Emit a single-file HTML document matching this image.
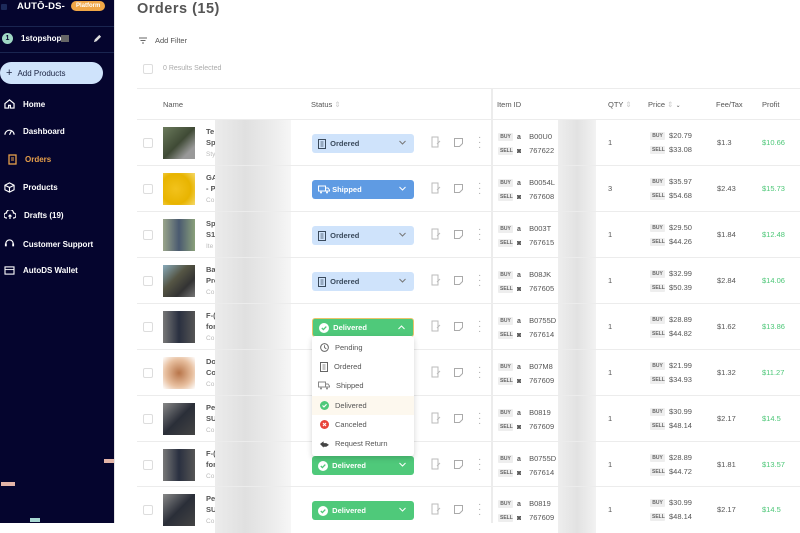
<!DOCTYPE html>
<html><head><meta charset="utf-8"><style>
*{margin:0;padding:0;box-sizing:border-box}
body{width:800px;height:523px;overflow:hidden;background:#fff;font-family:"Liberation Sans",sans-serif;position:relative;color:#444}
.a{position:absolute}
#sb{left:0;top:0;width:114px;height:523px;background:#05052e}
.nav{position:absolute;left:0;color:#fff;font-size:8px;font-weight:bold;display:flex;align-items:center}
.nav svg{margin:0 8px 0 4px}
#main{left:114px;top:0;width:686px;height:523px;border-left:1px solid #e4e4e4}
.hd{font-size:7.5px;color:#555}
.row{position:absolute;left:137px;width:663px;height:46px;border-top:1px solid #ececec}
.cb{position:absolute;left:6px;top:18px;width:10px;height:10px;border:1px solid #ddd;border-radius:2px}
.img{position:absolute;left:26px;top:7px;width:32px;height:32px}
.nm{position:absolute;left:69px;font-size:7.5px;color:#555;font-weight:bold;line-height:11px;top:6px}
.nm i{font-style:normal;font-weight:normal;color:#bbb;font-size:6.5px}
.blur{position:absolute;left:78px;top:0;width:76px;height:46px;background:linear-gradient(90deg,#ececec,#e0e0e0 40%,#eaeaea 70%,#f6f6f6)}
.pill{position:absolute;left:175px;top:14px;width:102px;height:19px;border-radius:3px;font-size:7.5px;font-weight:bold;display:flex;align-items:center;padding-left:6px}
.pill svg.ch{position:absolute;right:8px;top:6px}
.ord{background:#cfe3fb;color:#3a4a5c}
.shp{background:#5f9be3;color:#fff}
.del{background:#4fc97a;color:#fff}
.ic{position:absolute;top:16px}
.tag{display:inline-block;background:#eee;color:#666;font-size:5px;font-weight:bold;height:8px;line-height:8px;padding:0 2px;border-radius:1px;width:15px;text-align:center;margin-right:4px;vertical-align:middle}
.iid{position:absolute;left:361px;top:10px;font-size:7.5px;color:#555;line-height:13px}
.iid b{display:inline-block;width:10px;font-size:7px;color:#555}
.iblur{position:absolute;left:421px;top:0;width:38px;height:46px;background:linear-gradient(90deg,#eee,#e2e2e2 50%,#f2f2f2)}
.qty{position:absolute;left:471px;top:18px;font-size:7.5px;color:#555}
.pr{position:absolute;left:513px;top:9px;font-size:7.5px;color:#555;line-height:14px}
.fee{position:absolute;left:580px;top:18px;font-size:7.5px;color:#555}
.pf{position:absolute;left:625px;top:18px;font-size:7.5px;color:#4cc777}
#dd{left:312px;top:336px;width:102px;height:120px;background:#fff;box-shadow:0 2px 6px rgba(0,0,0,.18);border-radius:3px;z-index:5}
.di{position:absolute;left:0;width:102px;height:19px;font-size:7.5px;color:#555;display:flex;align-items:center;padding-left:8px}
.di svg{margin-right:6px}
</style></head><body>
<div id="sb" class="a">
 <div class="a" style="left:1px;top:4px;width:6px;height:6px;background:#1c2a5a;border-radius:1px"></div>
 <div class="a" style="left:17px;top:1px;color:#fff;font-weight:bold;font-size:9.5px;letter-spacing:.2px">AUTŌ-DS-</div>
 <div class="a" style="left:71px;top:1px;background:#f0a646;color:#fff;font-size:6px;font-weight:bold;border-radius:7px;padding:2px 5px">Platform</div>
 <div class="a" style="left:0;top:26px;width:114px;height:1px;background:#1a2550"></div>
 <div class="a" style="left:2px;top:33px;width:11px;height:11px;border-radius:50%;background:#9fd8c4;color:#05052e;font-size:7px;text-align:center;line-height:11px;font-weight:bold">1</div>
 <div class="a" style="left:21px;top:34px;color:#fff;font-size:8px;font-weight:bold">1stopshop<span style="display:inline-block;width:8px;height:7px;background:#666;vertical-align:middle"></span></div>
 <svg class="a" style="left:93px;top:34px" width="9" height="9" viewBox="0 0 10 10"><path d="M1 9l1-3 5-5 2 2-5 5z" fill="#ddd"/></svg>
 <div class="a" style="left:0;top:52px;width:114px;height:1px;background:#1a2550"></div>
 <div class="a" style="left:0;top:62px;width:103px;height:22px;border-radius:11px;background:#cfe3fb;color:#1a2240;font-size:8px;display:flex;align-items:center;padding-left:6px"><span style="font-size:11px;margin-right:5px">+</span>Add Products</div>
 <div class="nav" style="top:99px"><svg width="11" height="10" viewBox="0 0 12 11"><path d="M1 5L6 1l5 4v5H7V7H5v3H1z" fill="none" stroke="#fff" stroke-width="1.3"/></svg>Home</div>
 <div class="nav" style="top:127px"><svg width="11" height="8" viewBox="0 0 12 8"><path d="M1 7A5 5 0 0 1 11 7M6 7L8 3" fill="none" stroke="#fff" stroke-width="1.3"/></svg>Dashboard</div>
 <div class="nav" style="top:154px;left:4px;color:#e8a04a"><svg width="9" height="11" viewBox="0 0 9 11"><rect x="1" y="1" width="7" height="9" fill="none" stroke="#e8a04a" stroke-width="1.3"/><path d="M3 4h3M3 6h3" stroke="#e8a04a"/></svg>Orders</div>
 <div class="nav" style="top:182px"><svg width="11" height="11" viewBox="0 0 12 12"><path d="M6 1l5 2.5v5L6 11 1 8.5v-5zM1 3.5L6 6l5-2.5M6 6v5" fill="none" stroke="#fff" stroke-width="1.2"/></svg>Products</div>
 <div class="nav" style="top:210px"><svg width="12" height="10" viewBox="0 0 12 10"><path d="M3 8H2.5a2.5 2.5 0 0 1 0-5A3.5 3.5 0 0 1 9.5 3a2.5 2.5 0 0 1 0 5H9M6 9V5M4.5 6.5L6 5l1.5 1.5" fill="none" stroke="#fff" stroke-width="1.2"/></svg>Drafts (19)</div>
 <div class="nav" style="top:239px"><svg width="11" height="11" viewBox="0 0 12 12"><path d="M2 7V5a4 4 0 0 1 8 0v2" fill="none" stroke="#fff" stroke-width="1.3"/><rect x="1" y="5" width="2" height="3" fill="#fff"/><rect x="9" y="5" width="2" height="3" fill="#fff"/></svg>Customer Support</div>
 <div class="nav" style="top:266px"><svg width="11" height="9" viewBox="0 0 12 10"><rect x="1" y="1" width="10" height="8" fill="none" stroke="#fff" stroke-width="1.2"/><path d="M1 4h10" stroke="#fff"/></svg>AutoDS Wallet</div>
 <div class="a" style="left:104px;top:459px;width:10px;height:4px;background:#e3b5a8"></div>
 <div class="a" style="left:1px;top:482px;width:14px;height:4px;background:#e3b5a8"></div>
 <div class="a" style="left:30px;top:518px;width:10px;height:4px;background:#a8d8d3"></div>
</div>
<div id="main" class="a"></div>
<div class="a" style="left:137px;top:1px;font-size:14.5px;font-weight:bold;color:#555;letter-spacing:.5px">Orders (15)</div>
<svg class="a" style="left:139px;top:37px" width="8" height="7" viewBox="0 0 8 7"><path d="M0 1h8M1.5 3.5h5M3 6h2" stroke="#666" stroke-width="1"/></svg>
<div class="a" style="left:155px;top:36px;font-size:7.5px;color:#555">Add Filter</div>
<div class="a" style="left:143px;top:64px;width:10px;height:10px;border:1px solid #ddd;border-radius:2px"></div>
<div class="a" style="left:163px;top:65px;font-size:7px;color:#aaa">0 Results Selected</div>
<div class="a" style="left:137px;top:88px;width:663px;height:1px;background:#ececec"></div>
<div class="a" style="left:491px;top:88px;width:2px;height:435px;background:#ececec"></div>
<div class="a hd" style="left:163px;top:100px">Name</div>
<div class="a hd" style="left:311px;top:100px">Status <span style="color:#ccc">⇕</span></div>
<div class="a hd" style="left:497px;top:100px">Item ID</div>
<div class="a hd" style="left:608px;top:100px">QTY <span style="color:#ccc">⇕</span></div>
<div class="a hd" style="left:648px;top:100px">Price <span style="color:#ccc">⇕</span> <span style="font-size:6px">⌄</span></div>
<div class="a hd" style="left:716px;top:100px">Fee/Tax</div>
<div class="a hd" style="left:762px;top:100px">Profit</div>

<div class="row" style="top:119px"><div class="cb"></div><div class="img" style="background:linear-gradient(135deg,#6b7a5c,#3f4a35 50%,#999 80%)"></div><div class="nm">Te<br>Sp<br><i>Sty</i></div><div class="blur"></div>
<div class="pill ord"><svg width="8" height="10" viewBox="0 0 8 10"><rect x=".5" y=".5" width="7" height="9" fill="none" stroke="#3a4a5c"/><path d="M2.5 3h3M2.5 5h3M2.5 7h3" stroke="#3a4a5c" stroke-width=".7"/></svg>&nbsp; Ordered<svg class="ch" width="7" height="5" viewBox="0 0 7 5"><path d="M.5 1l3 3 3-3" fill="none" stroke="#777"/></svg></div>
<svg class="ic" style="left:294px" width="10" height="12" viewBox="0 0 10 12"><path d="M1 1h6v10H1zM6 8l3-3" fill="none" stroke="#bbb"/></svg><svg class="ic" style="left:317px;top:18px" width="9" height="9" viewBox="0 0 9 9"><path d="M.5.5h8v5l-3 3h-5z" fill="none" stroke="#aaa"/></svg><div class="ic" style="left:341px;top:15px;color:#aaa;font-size:10px;line-height:5px">·<br>·<br>·</div>
<div class="iid"><span class="tag">BUY</span><b>a</b> B00U0<br><span class="tag">SELL</span><b>◙</b> 767622</div><div class="iblur"></div><div class="qty">1</div><div class="pr"><span class="tag">BUY</span>$20.79<br><span class="tag">SELL</span>$33.08</div><div class="fee">$1.3</div><div class="pf">$10.66</div></div>

<div class="row" style="top:165px"><div class="cb"></div><div class="img" style="background:radial-gradient(circle at 40% 50%,#f2c21c,#e8b400 60%,#f5d96c)"></div><div class="nm">GA<br>- P<br><i>Co</i></div><div class="blur"></div>
<div class="pill shp"><svg width="12" height="9" viewBox="0 0 12 9"><path d="M.5 1h7v5h-7zM7.5 3h2.5l1.5 2v1h-4" fill="none" stroke="#fff"/><circle cx="3" cy="7.5" r="1" fill="#fff"/><circle cx="9" cy="7.5" r="1" fill="#fff"/></svg>&nbsp;Shipped<svg class="ch" width="7" height="5" viewBox="0 0 7 5"><path d="M.5 1l3 3 3-3" fill="none" stroke="#fff"/></svg></div>
<svg class="ic" style="left:294px" width="10" height="12" viewBox="0 0 10 12"><path d="M1 1h6v10H1zM6 8l3-3" fill="none" stroke="#bbb"/></svg><svg class="ic" style="left:317px;top:18px" width="9" height="9" viewBox="0 0 9 9"><path d="M.5.5h8v5l-3 3h-5z" fill="none" stroke="#aaa"/></svg><div class="ic" style="left:341px;top:15px;color:#aaa;font-size:10px;line-height:5px">·<br>·<br>·</div>
<div class="iid"><span class="tag">BUY</span><b>a</b> B0054L<br><span class="tag">SELL</span><b>◙</b> 767608</div><div class="iblur"></div><div class="qty">3</div><div class="pr"><span class="tag">BUY</span>$35.97<br><span class="tag">SELL</span>$54.68</div><div class="fee">$2.43</div><div class="pf">$15.73</div></div>

<div class="row" style="top:211px"><div class="cb"></div><div class="img" style="background:linear-gradient(90deg,#9aa58a,#4a5a70 50%,#8aa07a)"></div><div class="nm">Sp<br>S1<br><i>Ite</i></div><div class="blur"></div>
<div class="pill ord"><svg width="8" height="10" viewBox="0 0 8 10"><rect x=".5" y=".5" width="7" height="9" fill="none" stroke="#3a4a5c"/><path d="M2.5 3h3M2.5 5h3M2.5 7h3" stroke="#3a4a5c" stroke-width=".7"/></svg>&nbsp; Ordered<svg class="ch" width="7" height="5" viewBox="0 0 7 5"><path d="M.5 1l3 3 3-3" fill="none" stroke="#777"/></svg></div>
<svg class="ic" style="left:294px" width="10" height="12" viewBox="0 0 10 12"><path d="M1 1h6v10H1zM6 8l3-3" fill="none" stroke="#bbb"/></svg><svg class="ic" style="left:317px;top:18px" width="9" height="9" viewBox="0 0 9 9"><path d="M.5.5h8v5l-3 3h-5z" fill="none" stroke="#aaa"/></svg><div class="ic" style="left:341px;top:15px;color:#aaa;font-size:10px;line-height:5px">·<br>·<br>·</div>
<div class="iid"><span class="tag">BUY</span><b>a</b> B003T<br><span class="tag">SELL</span><b>◙</b> 767615</div><div class="iblur"></div><div class="qty">1</div><div class="pr"><span class="tag">BUY</span>$29.50<br><span class="tag">SELL</span>$44.26</div><div class="fee">$1.84</div><div class="pf">$12.48</div></div>

<div class="row" style="top:257px"><div class="cb"></div><div class="img" style="background:linear-gradient(135deg,#8ab,#554 40%,#333 70%,#777)"></div><div class="nm">Ba<br>Pro<br><i>Co</i></div><div class="blur"></div>
<div class="pill ord"><svg width="8" height="10" viewBox="0 0 8 10"><rect x=".5" y=".5" width="7" height="9" fill="none" stroke="#3a4a5c"/><path d="M2.5 3h3M2.5 5h3M2.5 7h3" stroke="#3a4a5c" stroke-width=".7"/></svg>&nbsp; Ordered<svg class="ch" width="7" height="5" viewBox="0 0 7 5"><path d="M.5 1l3 3 3-3" fill="none" stroke="#777"/></svg></div>
<svg class="ic" style="left:294px" width="10" height="12" viewBox="0 0 10 12"><path d="M1 1h6v10H1zM6 8l3-3" fill="none" stroke="#bbb"/></svg><svg class="ic" style="left:317px;top:18px" width="9" height="9" viewBox="0 0 9 9"><path d="M.5.5h8v5l-3 3h-5z" fill="none" stroke="#aaa"/></svg><div class="ic" style="left:341px;top:15px;color:#aaa;font-size:10px;line-height:5px">·<br>·<br>·</div>
<div class="iid"><span class="tag">BUY</span><b>a</b> B08JK<br><span class="tag">SELL</span><b>◙</b> 767605</div><div class="iblur"></div><div class="qty">1</div><div class="pr"><span class="tag">BUY</span>$32.99<br><span class="tag">SELL</span>$50.39</div><div class="fee">$2.84</div><div class="pf">$14.06</div></div>

<div class="row" style="top:303px"><div class="cb"></div><div class="img" style="background:linear-gradient(90deg,#777,#2a3040 50%,#555)"></div><div class="nm">F-(<br>for<br><i>Co</i></div><div class="blur"></div>
<div class="pill del" style="border:1px solid #e9c46a"><svg width="10" height="10" viewBox="0 0 10 10"><circle cx="5" cy="5" r="5" fill="#fff"/><path d="M2.8 5l1.6 1.6L7.3 3.6" fill="none" stroke="#4fc97a" stroke-width="1.3"/></svg>&nbsp; Delivered<svg class="ch" width="7" height="5" viewBox="0 0 7 5"><path d="M.5 4l3-3 3 3" fill="none" stroke="#fff"/></svg></div>
<svg class="ic" style="left:294px" width="10" height="12" viewBox="0 0 10 12"><path d="M1 1h6v10H1zM6 8l3-3" fill="none" stroke="#bbb"/></svg><svg class="ic" style="left:317px;top:18px" width="9" height="9" viewBox="0 0 9 9"><path d="M.5.5h8v5l-3 3h-5z" fill="none" stroke="#aaa"/></svg><div class="ic" style="left:341px;top:15px;color:#aaa;font-size:10px;line-height:5px">·<br>·<br>·</div>
<div class="iid"><span class="tag">BUY</span><b>a</b> B0755D<br><span class="tag">SELL</span><b>◙</b> 767614</div><div class="iblur"></div><div class="qty">1</div><div class="pr"><span class="tag">BUY</span>$28.89<br><span class="tag">SELL</span>$44.82</div><div class="fee">$1.62</div><div class="pf">$13.86</div></div>

<div class="row" style="top:349px"><div class="cb"></div><div class="img" style="background:radial-gradient(circle,#b8754a,#e8c0a0 60%,#fff)"></div><div class="nm">Do<br>Co<br><i>Co</i></div><div class="blur"></div>
<svg class="ic" style="left:294px" width="10" height="12" viewBox="0 0 10 12"><path d="M1 1h6v10H1zM6 8l3-3" fill="none" stroke="#bbb"/></svg><svg class="ic" style="left:317px;top:18px" width="9" height="9" viewBox="0 0 9 9"><path d="M.5.5h8v5l-3 3h-5z" fill="none" stroke="#aaa"/></svg><div class="ic" style="left:341px;top:15px;color:#aaa;font-size:10px;line-height:5px">·<br>·<br>·</div>
<div class="iid"><span class="tag">BUY</span><b>a</b> B07M8<br><span class="tag">SELL</span><b>◙</b> 767609</div><div class="iblur"></div><div class="qty">1</div><div class="pr"><span class="tag">BUY</span>$21.99<br><span class="tag">SELL</span>$34.93</div><div class="fee">$1.32</div><div class="pf">$11.27</div></div>

<div class="row" style="top:395px"><div class="cb"></div><div class="img" style="background:linear-gradient(135deg,#888,#2a2e38 50%,#444)"></div><div class="nm">Pe<br>SU<br><i>Co</i></div><div class="blur"></div>
<svg class="ic" style="left:294px" width="10" height="12" viewBox="0 0 10 12"><path d="M1 1h6v10H1zM6 8l3-3" fill="none" stroke="#bbb"/></svg><svg class="ic" style="left:317px;top:18px" width="9" height="9" viewBox="0 0 9 9"><path d="M.5.5h8v5l-3 3h-5z" fill="none" stroke="#aaa"/></svg><div class="ic" style="left:341px;top:15px;color:#aaa;font-size:10px;line-height:5px">·<br>·<br>·</div>
<div class="iid"><span class="tag">BUY</span><b>a</b> B0819<br><span class="tag">SELL</span><b>◙</b> 767609</div><div class="iblur"></div><div class="qty">1</div><div class="pr"><span class="tag">BUY</span>$30.99<br><span class="tag">SELL</span>$48.14</div><div class="fee">$2.17</div><div class="pf">$14.5</div></div>

<div class="row" style="top:441px"><div class="cb"></div><div class="img" style="background:linear-gradient(90deg,#777,#2a3040 50%,#555)"></div><div class="nm">F-(<br>for<br><i>Co</i></div><div class="blur"></div>
<div class="pill del"><svg width="10" height="10" viewBox="0 0 10 10"><circle cx="5" cy="5" r="5" fill="#fff"/><path d="M2.8 5l1.6 1.6L7.3 3.6" fill="none" stroke="#4fc97a" stroke-width="1.3"/></svg>&nbsp; Delivered<svg class="ch" width="7" height="5" viewBox="0 0 7 5"><path d="M.5 1l3 3 3-3" fill="none" stroke="#fff"/></svg></div>
<svg class="ic" style="left:294px" width="10" height="12" viewBox="0 0 10 12"><path d="M1 1h6v10H1zM6 8l3-3" fill="none" stroke="#bbb"/></svg><svg class="ic" style="left:317px;top:18px" width="9" height="9" viewBox="0 0 9 9"><path d="M.5.5h8v5l-3 3h-5z" fill="none" stroke="#aaa"/></svg><div class="ic" style="left:341px;top:15px;color:#aaa;font-size:10px;line-height:5px">·<br>·<br>·</div>
<div class="iid"><span class="tag">BUY</span><b>a</b> B0755D<br><span class="tag">SELL</span><b>◙</b> 767614</div><div class="iblur"></div><div class="qty">1</div><div class="pr"><span class="tag">BUY</span>$28.89<br><span class="tag">SELL</span>$44.72</div><div class="fee">$1.81</div><div class="pf">$13.57</div></div>

<div class="row" style="top:486px"><div class="cb"></div><div class="img" style="background:linear-gradient(135deg,#888,#2a2e38 50%,#444)"></div><div class="nm">Pe<br>SU<br><i>Co</i></div><div class="blur"></div>
<div class="pill del"><svg width="10" height="10" viewBox="0 0 10 10"><circle cx="5" cy="5" r="5" fill="#fff"/><path d="M2.8 5l1.6 1.6L7.3 3.6" fill="none" stroke="#4fc97a" stroke-width="1.3"/></svg>&nbsp; Delivered<svg class="ch" width="7" height="5" viewBox="0 0 7 5"><path d="M.5 1l3 3 3-3" fill="none" stroke="#fff"/></svg></div>
<svg class="ic" style="left:294px" width="10" height="12" viewBox="0 0 10 12"><path d="M1 1h6v10H1zM6 8l3-3" fill="none" stroke="#bbb"/></svg><svg class="ic" style="left:317px;top:18px" width="9" height="9" viewBox="0 0 9 9"><path d="M.5.5h8v5l-3 3h-5z" fill="none" stroke="#aaa"/></svg><div class="ic" style="left:341px;top:15px;color:#aaa;font-size:10px;line-height:5px">·<br>·<br>·</div>
<div class="iid"><span class="tag">BUY</span><b>a</b> B0819<br><span class="tag">SELL</span><b>◙</b> 767609</div><div class="iblur"></div><div class="qty">1</div><div class="pr"><span class="tag">BUY</span>$30.99<br><span class="tag">SELL</span>$48.14</div><div class="fee">$2.17</div><div class="pf">$14.5</div></div>

<div id="dd" class="a">
 <div class="di" style="top:2px"><svg width="9" height="9" viewBox="0 0 10 10"><circle cx="5" cy="5" r="4.3" fill="none" stroke="#666" stroke-width="1.1"/><path d="M5 2.5V5l2 1.5" fill="none" stroke="#666"/></svg>Pending</div>
 <div class="di" style="top:21px"><svg width="8" height="10" viewBox="0 0 8 10"><rect x=".5" y=".5" width="7" height="9" fill="none" stroke="#666"/><path d="M2.5 3h3M2.5 5h3M2.5 7h3" stroke="#666" stroke-width=".7"/></svg>Ordered</div>
 <div class="di" style="top:40px;padding-left:6px"><svg width="12" height="9" viewBox="0 0 12 9"><path d="M.5 1h7v5h-7zM7.5 3h2.5l1.5 2v1h-4" fill="none" stroke="#888"/><circle cx="3" cy="7.5" r="1" fill="#888"/><circle cx="9" cy="7.5" r="1" fill="#888"/></svg>Shipped</div>
 <div class="di" style="top:60px;background:#fdf8ee"><svg width="9" height="9" viewBox="0 0 10 10"><circle cx="5" cy="5" r="5" fill="#4fc97a"/><path d="M2.8 5l1.6 1.6L7.3 3.6" fill="none" stroke="#fff" stroke-width="1.3"/></svg>Delivered</div>
 <div class="di" style="top:79px"><svg width="9" height="9" viewBox="0 0 10 10"><circle cx="5" cy="5" r="5" fill="#e8443a"/><path d="M3.3 3.3l3.4 3.4M6.7 3.3L3.3 6.7" stroke="#fff" stroke-width="1.2"/></svg>Canceled</div>
 <div class="di" style="top:98px"><svg width="9" height="8" viewBox="0 0 10 8"><path d="M0 4l4-3v2h3l3 2-3 2H4v1z" fill="#444"/></svg>Request Return</div>
</div>
</body></html>
